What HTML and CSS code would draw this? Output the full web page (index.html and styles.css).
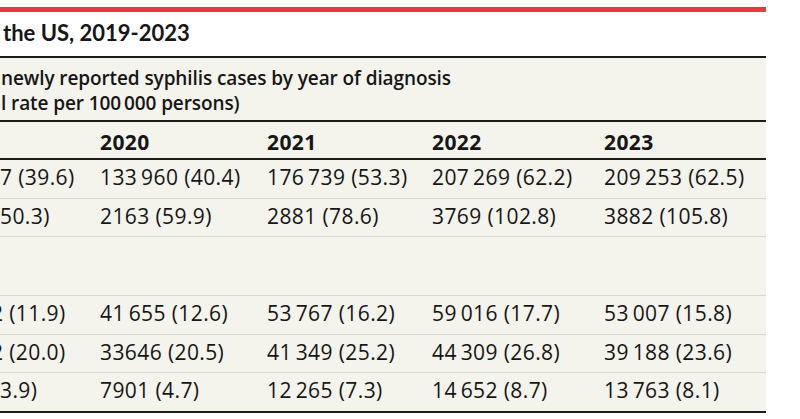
FILE: index.html
```html
<!DOCTYPE html>
<html lang="en">
<head>
<meta charset="utf-8">
<title>Syphilis cases in the US, 2019-2023</title>
<link rel="stylesheet" href="styles.css">
</head>
<body>
<div class="page">
  <div class="redbar"></div>
  <h1 class="title">the US, 2019-2023</h1>
  <div class="table">
    <div class="span-head">newly reported syphilis cases by year of diagnosis<br>l rate per 100&#8201;000 persons)</div>
    <div class="row years">
      <div class="cell"></div>
      <div class="cell">2020</div>
      <div class="cell">2021</div>
      <div class="cell">2022</div>
      <div class="cell">2023</div>
    </div>
    <div class="row">
      <div class="cell first">7 (39.6)</div>
      <div class="cell">133&#8201;960 (40.4)</div>
      <div class="cell">176&#8201;739 (53.3)</div>
      <div class="cell">207&#8201;269 (62.2)</div>
      <div class="cell">209&#8201;253 (62.5)</div>
    </div>
    <div class="row">
      <div class="cell first">50.3)</div>
      <div class="cell">2163 (59.9)</div>
      <div class="cell">2881 (78.6)</div>
      <div class="cell">3769 (102.8)</div>
      <div class="cell">3882 (105.8)</div>
    </div>
    <div class="row blank">
      <div class="cell"></div>
      <div class="cell"></div>
      <div class="cell"></div>
      <div class="cell"></div>
      <div class="cell"></div>
    </div>
    <div class="row">
      <div class="cell first"><span class="frag">2</span> (11.9)</div>
      <div class="cell">41&#8201;655 (12.6)</div>
      <div class="cell">53&#8201;767 (16.2)</div>
      <div class="cell">59&#8201;016 (17.7)</div>
      <div class="cell">53&#8201;007 (15.8)</div>
    </div>
    <div class="row">
      <div class="cell first"><span class="frag">2</span> (20.0)</div>
      <div class="cell">33646 (20.5)</div>
      <div class="cell">41&#8201;349 (25.2)</div>
      <div class="cell">44&#8201;309 (26.8)</div>
      <div class="cell">39&#8201;188 (23.6)</div>
    </div>
    <div class="row last">
      <div class="cell first">3.9)</div>
      <div class="cell">7901 (4.7)</div>
      <div class="cell">12&#8201;265 (7.3)</div>
      <div class="cell">14&#8201;652 (8.7)</div>
      <div class="cell">13&#8201;763 (8.1)</div>
    </div>
  </div>
</div>
</body>
</html>
```

FILE: styles.css
```css
html, body {
  margin: 0;
  padding: 0;
  background: #ffffff;
  overflow: hidden;
}

body {
  font-family: "Open Sans", "Noto Sans", sans-serif;
  color: #161616;
}

.page {
  width: 766px;
}

.redbar {
  margin-top: 7px;
  height: 5px;
  background: #e8383f;
}

.title {
  margin: 0;
  padding: 6px 0 0 3px;
  height: 38px;
  border-bottom: 2px solid #1c1c1c;
  font-family: "Lato", "Open Sans", sans-serif;
  font-weight: 700;
  font-size: 22px;
  line-height: 30px;
  white-space: nowrap;
}

.table {
  background: #f4f3ec;
  border-bottom: 2px solid #1c1c1c;
  font-size: 21px;
  letter-spacing: 0.4px;
}

.span-head {
  padding: 8px 0 4px 1px;
  font-size: 19px;
  letter-spacing: -0.1px;
  line-height: 25px;
  font-weight: 600;
  border-bottom: 2px solid #1c1c1c;
  white-space: nowrap;
}

.row {
  display: grid;
  grid-template-columns: 94px 167px 165px 172px 168px;
  border-bottom: 1px solid #dad8cd;
}

.row.last {
  border-bottom: none;
}

.cell {
  padding: 5px 0 8.5px 6px;
  line-height: 24px;
  white-space: nowrap;
}

.cell.first {
  padding-left: 0;
  overflow: hidden;
}

.frag {
  margin-left: -9px;
}

.row.years {
  border-bottom: 2px solid #1c1c1c;
}

.row.years .cell {
  padding-top: 8px;
  padding-bottom: 4px;
  font-weight: 700;
}

.row.blank {
  height: 58px;
}
```
